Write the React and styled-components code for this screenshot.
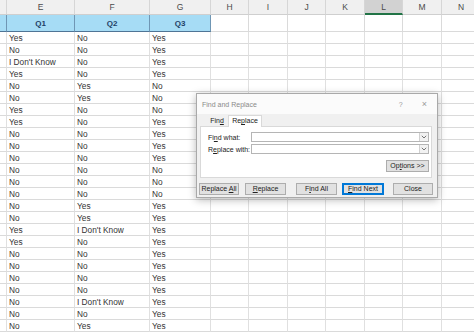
import React from 'react'
import styled, {createGlobalStyle} from 'styled-components'

const GlobalStyle = createGlobalStyle`
  html, body {
    margin: 0;
    padding: 0;
    background: #fff;
    overflow: hidden;
  }
  * { box-sizing: border-box; }
`

const columns = [
  {name: 'D', width: 7},
  {name: 'E', width: 68, title: 'Q1'},
  {name: 'F', width: 75, title: 'Q2'},
  {name: 'G', width: 61, title: 'Q3'},
  {name: 'H', width: 38},
  {name: 'I', width: 39},
  {name: 'J', width: 38},
  {name: 'K', width: 39},
  {name: 'L', width: 38, selected: true},
  {name: 'M', width: 39},
  {name: 'N', width: 39},
]

const rows = [
  ['Yes', 'No', 'Yes'],
  ['No', 'No', 'Yes'],
  ["I Don't Know", 'No', 'Yes'],
  ['Yes', 'No', 'Yes'],
  ['No', 'Yes', 'No'],
  ['No', 'Yes', 'No'],
  ['Yes', 'No', 'No'],
  ['Yes', 'No', 'Yes'],
  ['No', 'No', 'Yes'],
  ['No', 'No', 'Yes'],
  ['No', 'No', 'Yes'],
  ['No', 'No', 'No'],
  ['No', 'No', 'No'],
  ['No', 'No', 'No'],
  ['No', 'Yes', 'Yes'],
  ['No', 'Yes', 'Yes'],
  ['Yes', "I Don't Know", 'Yes'],
  ['Yes', 'No', 'Yes'],
  ['No', 'No', 'Yes'],
  ['No', 'No', 'Yes'],
  ['No', 'No', 'Yes'],
  ['No', 'No', 'Yes'],
  ['No', "I Don't Know", 'Yes'],
  ['No', 'No', 'Yes'],
  ['No', 'Yes', 'Yes'],
]

const Sheet = styled.div`
  position: relative;
  width: 474px;
  height: 333px;
  overflow: hidden;
  font-family: "Liberation Sans", Arial, sans-serif;
`

const Grid = styled.div`
  display: grid;
  grid-template-columns: ${props => props.cols};
  grid-auto-rows: 12px;
  grid-template-rows: 15px 17px;
  width: max-content;
`

const ColHead = styled.div`
  display: flex;
  align-items: center;
  justify-content: center;
  background: ${props => props.selected ? '#d2d2d2' : '#f0f0f0'};
  border-right: 1px solid #d6d6d6;
  border-bottom: ${props => props.selected ? '2px solid #217346' : '1px solid #cfcfcf'};
  color: #4a4a4a;
  font-size: 8.5px;
`

const TitleCell = styled.div`
  display: flex;
  align-items: center;
  justify-content: center;
  background: ${props => props.blue ? '#a6dcf5' : '#fff'};
  border-right: 1px solid ${props => props.blue ? '#6f96b4' : '#dadada'};
  border-bottom: 1px solid ${props => props.blue ? '#4f7596' : '#dadada'};
  color: #1f3f66;
  font-weight: bold;
  font-size: 8px;
`

const Cell = styled.div`
  display: flex;
  align-items: center;
  padding-left: 2px;
  border-right: 1px solid #e0e0e0;
  border-bottom: 1px solid #dadada;
  color: #333;
  font-size: 8.3px;
  white-space: nowrap;
  overflow: hidden;
`

const Dialog = styled.div`
  position: absolute;
  left: 196px;
  top: 93px;
  width: 242px;
  height: 105px;
  background: #f0f0f0;
  border: 1px solid #a9a9a9;
  box-shadow: 0 2px 8px rgba(0, 0, 0, 0.28);
  display: flex;
  flex-direction: column;
  font-family: "Liberation Sans", Arial, sans-serif;
  font-size: 7px;
  color: #222;
`

const TitleBar = styled.div`
  height: 20px;
  background: #fbfbfb;
  display: flex;
  align-items: center;
  padding: 0 10px 0 5px;
  color: #8a8a8a;
`

const TitleText = styled.span`
  flex: 1;
`

const TitleIcon = styled.span`
  color: #999;
  font-size: ${props => props.size || 7}px;
  margin-left: ${props => props.gap || 0}px;
`

const Tabs = styled.div`
  display: flex;
  padding-left: 9px;
  height: 11px;
  margin-top: 1px;
`

const Tab = styled.div`
  width: ${props => props.w}px;
  line-height: 10px;
  text-align: center;
  background: ${props => props.active ? '#fff' : 'transparent'};
  border: 1px solid ${props => props.active ? '#d9d9d9' : 'transparent'};
  border-bottom: none;
  position: relative;
  z-index: 1;
  margin-bottom: -1px;
`

const Panel = styled.div`
  margin: 0 5px 0 3px;
  height: 52px;
  background: #fff;
  border: 1px solid #d9d9d9;
  padding: 5px 2px 0 7px;
  display: flex;
  flex-direction: column;
  gap: 2px;
`

const FieldRow = styled.div`
  display: flex;
  align-items: center;
  height: 10px;
`

const Label = styled.span`
  width: 43px;
  white-space: nowrap;
`

const Combo = styled.div`
  flex: 1;
  height: 10px;
  border: 1px solid #b5b5b5;
  background: #fff;
  display: flex;
  justify-content: flex-end;
`

const ComboButton = styled.div`
  width: 9px;
  height: 100%;
  border-left: 1px solid #d0d0d0;
  background: #f2f2f2;
  display: flex;
  align-items: center;
  justify-content: center;
`

const OptionsRow = styled.div`
  display: flex;
  justify-content: flex-end;
  margin-top: 4px;
`

const Button = styled.div`
  width: ${props => props.w || 41}px;
  height: 12px;
  margin-left: ${props => props.ml || 0}px;
  line-height: 10px;
  text-align: center;
  background: #e1e1e1;
  border: 1px solid ${props => props.primary ? '#0078d7' : '#adadad'};
  box-shadow: ${props => props.primary ? 'inset 0 0 0 1px #0078d7' : 'none'};
  color: #222;
  white-space: nowrap;
  flex-shrink: 0;
`

const ButtonRow = styled.div`
  display: flex;
  margin-top: 5px;
  padding-left: 2px;
`

const Chevron = () => (
  <svg width="6" height="4" viewBox="0 0 6 4">
    <path d="M0.8 0.8 L3 3 L5.2 0.8" fill="none" stroke="#666" strokeWidth="0.9" />
  </svg>
)

const U = styled.span`
  text-decoration: underline;
`

export default function App() {
  const cols = columns.map(c => `${c.width}px`).join(' ')
  return (
    <Sheet>
      <GlobalStyle />
      <Grid cols={cols}>
        {columns.map(c => (
          <ColHead key={c.name} selected={c.selected}>{c.name === 'D' ? '' : c.name}</ColHead>
        ))}
        {columns.map((c, i) => (
          <TitleCell key={'t' + c.name} blue={i < 4}>{c.title || ''}</TitleCell>
        ))}
        {rows.map((r, ri) =>
          columns.map((c, ci) => (
            <Cell key={ri + '-' + c.name}>{ci >= 1 && ci <= 3 ? r[ci - 1] : ''}</Cell>
          ))
        )}
      </Grid>

      <Dialog>
        <TitleBar>
          <TitleText>Find and Replace</TitleText>
          <TitleIcon>?</TitleIcon>
          <TitleIcon size={9} gap={19}>×</TitleIcon>
        </TitleBar>
        <Tabs>
          <Tab w={22}>Fin<U>d</U></Tab>
          <Tab w={34} active>Re<U>p</U>lace</Tab>
        </Tabs>
        <Panel>
          <FieldRow>
            <Label>Fi<U>n</U>d what:</Label>
            <Combo><ComboButton><Chevron /></ComboButton></Combo>
          </FieldRow>
          <FieldRow>
            <Label>R<U>e</U>place with:</Label>
            <Combo><ComboButton><Chevron /></ComboButton></Combo>
          </FieldRow>
          <OptionsRow>
            <Button w={43}>Op<U>t</U>ions &gt;&gt;</Button>
          </OptionsRow>
        </Panel>
        <ButtonRow>
          <Button w={40}>Replace <U>A</U>ll</Button>
          <Button ml={6}><U>R</U>eplace</Button>
          <Button ml={10}>F<U>i</U>nd All</Button>
          <Button ml={5} w={42} primary><U>F</U>ind Next</Button>
          <Button ml={9} w={40}>Close</Button>
        </ButtonRow>
      </Dialog>
    </Sheet>
  )
}
